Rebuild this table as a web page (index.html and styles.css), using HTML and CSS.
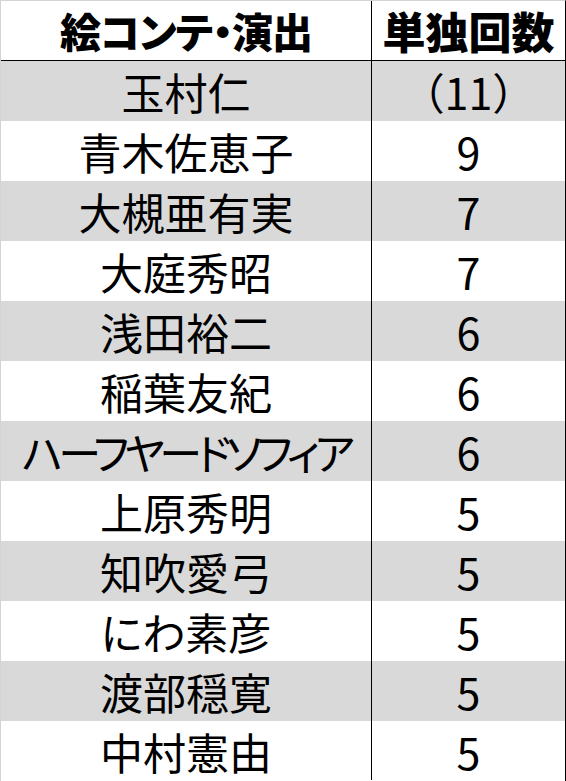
FILE: index.html
```html
<!DOCTYPE html>
<html lang="ja">
<head>
<meta charset="utf-8">
<link rel="stylesheet" href="styles.css">
</head>
<body>
<div class="sheet">
  <div class="cell head name">絵コンテ・演出</div>
  <div class="cell head num">単独回数</div>

  <div class="cell name odd">玉村仁</div><div class="cell num odd">（11）</div>
  <div class="cell name">青木佐恵子</div><div class="cell num">9</div>
  <div class="cell name odd">大槻亜有実</div><div class="cell num odd">7</div>
  <div class="cell name">大庭秀昭</div><div class="cell num">7</div>
  <div class="cell name odd">浅田裕二</div><div class="cell num odd">6</div>
  <div class="cell name">稲葉友紀</div><div class="cell num">6</div>
  <div class="cell name odd kana">ハーフヤードソフィア</div><div class="cell num odd">6</div>
  <div class="cell name">上原秀明</div><div class="cell num">5</div>
  <div class="cell name odd">知吹愛弓</div><div class="cell num odd">5</div>
  <div class="cell name">にわ素彦</div><div class="cell num">5</div>
  <div class="cell name odd">渡部穏寛</div><div class="cell num odd">5</div>
  <div class="cell name last">中村憲由</div><div class="cell num last">5</div>
</div>
</body>
</html>
```

FILE: styles.css
```css
html, body {
  margin: 0;
  padding: 0;
  background: #ffffff;
}

.sheet {
  width: 566px;
  box-sizing: border-box;
  border-top: 1px solid #d4d4d4;
  border-left: 1px solid #d4d4d4;
  border-right: 1px solid #000000;
  border-bottom: 1px solid #000000;
  display: grid;
  grid-template-columns: 371px 193px;
  grid-auto-rows: 60px;
  font-family: "Noto Sans CJK JP", "Noto Sans", sans-serif;
  color: #000000;
}

.cell {
  display: flex;
  align-items: center;
  justify-content: center;
  font-size: 43px;
  line-height: 1;
  white-space: nowrap;
  padding-top: 1px;
  box-sizing: border-box;
}

.name {
  border-right: 1px solid #000000;
  font-feature-settings: "palt";
}

.odd {
  background: #d9d9d9;
}

.head {
  height: 60px;
  font-weight: 900;
  font-size: 41px;
  border-bottom: 1px solid #000000;
  padding-top: 0;
}

.head.name {
  letter-spacing: -1px;
}

.head.num {
  font-size: 43px;
}

.last {
  height: 59px;
}

.kana {
  letter-spacing: -5px;
}
```
